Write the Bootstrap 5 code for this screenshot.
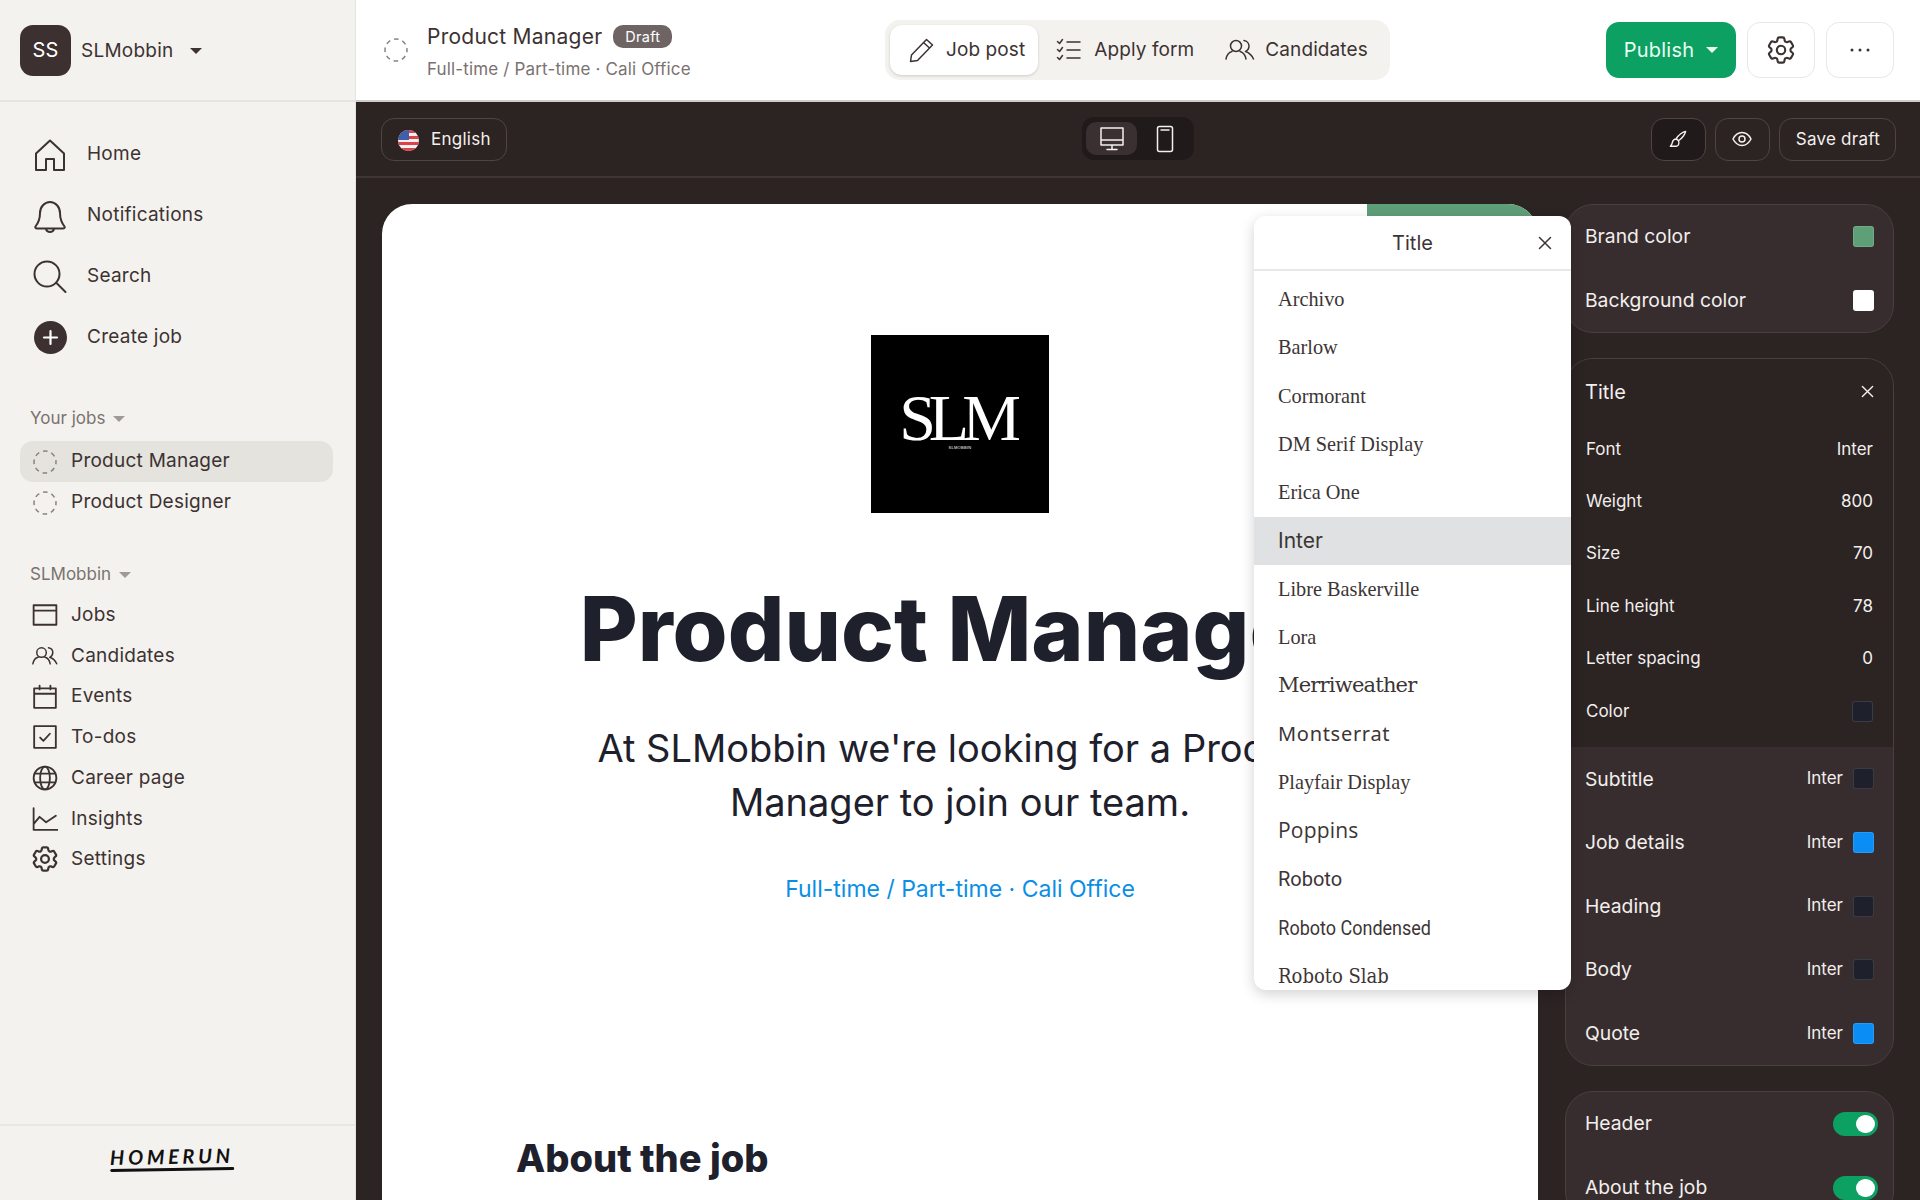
<!DOCTYPE html>
<html lang="en">
<head>
    <meta charset="UTF-8">
    <meta name="viewport" content="width=device-width, initial-scale=1">
    <title>Product Manager - Homerun</title>

    <link href="https://cdn.jsdelivr.net/npm/bootstrap@5.3.2/dist/css/bootstrap.min.css" rel="stylesheet">

    <style>
        html, body { height: 100%; margin: 0; overflow: hidden; }
        body { font-family: Inter, "Liberation Sans", sans-serif; color: #3d3232; font-size: 19px; letter-spacing: .25px; display: flex; }
        svg { flex: none; fill: none; stroke: currentColor; stroke-width: 1.5; stroke-linecap: round; stroke-linejoin: round; }

        /* left sidebar */
        .side { width: 356px; flex: none; height: 1200px; background: #f4f2ee; border-right: 1px solid #e6e4df; display: flex; flex-direction: column; }
        .side-head { height: 102px; padding: 2px 0 0 20px; border-bottom: 2px solid #e6e4df; }
        .avatar { width: 51px; height: 51px; border-radius: 13px; background: #3d3030; color: #fff; font-size: 20px; margin: -2px 10px 0 0; }
        .caret-down { width: 0; height: 0; border-left: 6px solid transparent; border-right: 6px solid transparent; border-top: 6px solid currentColor; display: inline-block; }
        .main-links { padding-top: 22px; margin-bottom: 39px; }
        .main-link { height: 61px; padding-left: 33px; gap: 20px; color: #3d3232; }
        .icon-slot { width: 34px; }
        .main-link svg { stroke-width: 2; }
        .side-label { font-size: 17px; color: #7a7270; padding-left: 30px; gap: 8px; height: 24px; letter-spacing: 0; }
        .side-label .caret-down { color: #a09a97; }
        .job-list { margin: 10px 0 40px; }
        .job-row { height: 41px; margin: 0 22px 0 20px; padding-left: 13px; gap: 14px; border-radius: 13px; }
        .job-row.is-on { background: #e4e3dd; }
        .dash-ring { color: #8a8381; }
        .org-list { padding-top: 8px; }
        .org-row { height: 40.7px; padding-left: 32px; gap: 13px; }
        .org-row svg { width: 26px; height: 26px; stroke-width: 1.7; }
        .side-foot { margin-top: auto; height: 76px; border-top: 2px solid #e9e7e2; padding: 0 12px 10px 0; }
        .brand-mark { transform: rotate(-1deg); }
        .brand-word { font-family: Lato, "Liberation Sans", sans-serif; font-style: italic; font-weight: 700; font-size: 20px; letter-spacing: 3.7px; color: #111; line-height: 22px; }
        .brand-line { height: 3px; background: #111; border-radius: 2px; margin-top: 1px; }

        /* top bar */
        .work { flex: 1; min-width: 0; height: 1200px; display: flex; flex-direction: column; background: #2c2323; }
        .topbar { height: 102px; flex: none; background: #fff; border-bottom: 2px solid #cfcdca; padding: 0 26px 0 28px; position: relative; }
        .job-block { margin-left: 19px; padding-top: 2px; }
        .job-title { font-size: 21px; line-height: 26px; color: #3d3232; }
        .draft-tag { background: #6e6464; color: #fff; font-size: 14.5px; border-radius: 10px; padding: 2px 12px; margin-left: 11px; line-height: 19px; }
        .job-sub { font-size: 17px; color: #7a7270; margin-top: 9px; line-height: 20px; letter-spacing: .15px; }
        .seg-wrap { position: absolute; left: 529px; top: 20px; width: 505px; height: 60px; background: #f4f2ee; border-radius: 15px; padding: 5px; letter-spacing: .1px; }
        .seg-btn { height: 50px; padding: 0 16px 0 18px; gap: 10px; border-radius: 12px; font-size: 19px; color: #3d3232; white-space: nowrap; }
        .seg-btn:nth-child(2) { gap: 12px; }
        .seg-btn:last-child { padding-left: 15px; }
        .seg-btn.is-on { background: #fff; box-shadow: 0 1px 3px rgba(0,0,0,.16); padding-right: 13px; }
        .top-actions { gap: 11px; }
        .publish-btn { background: #0ca062; color: #eafff4; height: 56px; width: 130px; border-radius: 13px; font-size: 20px; gap: 12px; }
        .ghost-btn { width: 68px; height: 56px; border: 1px solid #eae8e5; border-radius: 13px; background: #fff; color: #3d3232; }

        /* dark tool bar */
        .toolbar { height: 76px; flex: none; padding: 0 24px 0 25px; border-bottom: 2px solid #3f3535; color: #f4f0ee; position: relative; }
        .dark-btn { height: 43px; border: 1px solid #4f4445; border-radius: 13px; font-size: 17px; padding: 2px 15px 0 16px; gap: 12px; }
        .dark-btn.is-square { width: 55px; padding: 0; }
        .dark-btn.is-pressed { background: #211a1a; }
        .tool-actions { gap: 9px; }
        .device-wrap { position: absolute; left: 726px; top: 15px; width: 112px; height: 43px; background: #211a1a; border-radius: 12px; padding: 5px 4px; gap: 2px; }
        .device-btn { width: 52px; border-radius: 10px; }
        .device-btn.is-on { background: #3a3031; }

        /* canvas */
        .canvas { flex: 1; min-height: 0; padding: 26px 26px 0; gap: 27px; overflow: hidden; position: relative; }
        .sheet { width: 1156px; flex: none; background: #fff; border-radius: 30px 30px 0 0; overflow: hidden; height: 1100px; letter-spacing: 0; }
        .sheet-tab { width: 171px; height: 60px; background: #5f9f78; margin-left: auto; }
        .sheet-logo { width: 178px; height: 178px; background: #000; color: #fff; margin: 71px auto 0; }
        .logo-word { font-family: "Liberation Serif", serif; font-size: 66px; line-height: 48px; letter-spacing: -7px; margin-right: 7px; margin-top: -4px; }
        .logo-small { font-family: "Liberation Sans", sans-serif; font-size: 4px; line-height: 6px; letter-spacing: .3px; margin-top: 3px; }
        .sheet-title { font-family: Inter, sans-serif; font-weight: 800; font-size: 89px; line-height: 100px; color: #1e202c; white-space: nowrap; margin: 66px 0 0; }
        .sheet-sub { font-size: 38px; line-height: 54px; color: #1e202c; width: 760px; margin: 42px auto 0; }
        .sheet-meta { font-size: 23px; color: #0a8ee6; margin-top: 43px; }
        .sheet-head { font-weight: 800; font-size: 38px; line-height: 46px; color: #1e202c; margin: 228px 0 0 134px; }

        /* font popup */
        .font-pop { position: absolute; left: 898px; top: 38px; width: 317px; height: 774px; background: #fff; border-radius: 12px; overflow: hidden; box-shadow: 0 4px 14px rgba(0,0,0,.18); z-index: 5; color: #3d3535; letter-spacing: 0; }
        .font-pop-head { height: 55px; border-bottom: 2px solid #e8e8e8; font-size: 20px; position: relative; }
        .font-pop-close { position: absolute; right: 19px; top: 20px; }
        .font-rows { padding-top: 4px; }
        .font-row { height: 48.35px; padding-left: 24px; font-size: 21px; }
        .font-row.is-on { background: #dfe1e3; }
        .f-serif { font-family: "Liberation Serif", serif; font-size: 20.3px; }
        .f-merri { font-family: "DejaVu Serif", serif; font-size: 21px; letter-spacing: -.8px; }
        .f-mont { font-family: "Noto Sans", sans-serif; font-size: 20px; letter-spacing: .7px; }
        .f-pop { font-family: "Open Sans", sans-serif; font-size: 21px; letter-spacing: .2px; }
        .f-robo { font-family: Roboto, sans-serif; font-size: 20px; }
        .f-cond { font-family: Roboto, sans-serif; font-size: 20px; transform: scaleX(.9); transform-origin: left center; padding-left: 27px; }
        .f-slab { font-family: "DejaVu Serif Condensed", "DejaVu Serif", serif; font-size: 20px; }

        /* right panels */
        .panels { width: 329px; flex: none; gap: 25px; color: #f2efed; letter-spacing: 0; }
        .tool-box { background: #382d2e; border: 1px solid #4a3f40; border-radius: 28px; overflow: hidden; flex: none; }
        .swatch { width: 21px; height: 21px; border-radius: 3px; border: 1px solid rgba(255,255,255,.12); flex: none; }
        .box-row { height: 63.6px; padding: 0 19px; font-size: 19.3px; }
        .tool-dark { background: #2c2323; padding-top: 1px; height: 388px; }
        .tool-title { height: 63px; padding: 0 19px; font-size: 20px; }
        .prop-row { height: 52.4px; padding: 0 20px; font-size: 17px; }
        .mini-font { font-size: 17px; margin-right: 10px; }
        .toggle-bar { width: 45px; height: 24px; background: #0ca062; border-radius: 12px; padding: 3px; }
        .toggle-dot { width: 19px; height: 18px; border-radius: 9px; background: #fff; margin-left: auto; }
        .box-row.has-toggle { padding-right: 15px; }
    </style>
</head>
<body>

<!-- iconos -->
<svg width="0" height="0" class="position-absolute">
    <symbol id="i-ring" viewBox="0 0 24 24"><circle cx="12" cy="12" r="11" stroke-dasharray="4.600 4.040" stroke-dashoffset="2.300" stroke-linecap="butt"/></symbol>
    <symbol id="i-users" viewBox="0 0 30 24"><circle cx="11" cy="8" r="5.500"/><path d="M1 21c1-5 4-7 6-7.500M21 21c-1-5-4-7-6-7.500M19 2.500c3 .5 5 3 5 5.500s-1.500 4.500-3.500 5.500c3 1 6 3 8 7.500"/></symbol>
    <symbol id="i-gear" viewBox="2 2 20 20"><path d="M9.594 3.94c.09-.542.56-.94 1.11-.94h2.593c.55 0 1.02.398 1.11.94l.213 1.281c.063.374.313.686.645.87.074.04.147.083.22.127.325.196.72.257 1.075.124l1.217-.456a1.125 1.125 0 0 1 1.37.49l1.296 2.247a1.125 1.125 0 0 1-.26 1.431l-1.003.827c-.293.241-.438.613-.43.992a7.723 7.723 0 0 1 0 .255c-.008.378.137.75.43.991l1.004.827c.424.35.534.955.26 1.43l-1.298 2.247a1.125 1.125 0 0 1-1.369.491l-1.217-.456c-.355-.133-.75-.072-1.076.124a6.47 6.47 0 0 1-.22.128c-.331.183-.581.495-.644.869l-.213 1.281c-.09.543-.56.94-1.11.94h-2.594c-.55 0-1.019-.398-1.11-.94l-.213-1.281c-.062-.374-.312-.686-.644-.87a6.52 6.52 0 0 1-.22-.127c-.325-.196-.72-.257-1.076-.124l-1.217.456a1.125 1.125 0 0 1-1.369-.49l-1.297-2.247a1.125 1.125 0 0 1 .26-1.431l1.004-.827c.292-.24.437-.613.43-.991a6.932 6.932 0 0 1 0-.255c.007-.38-.138-.751-.43-.992l-1.004-.827a1.125 1.125 0 0 1-.26-1.43l1.297-2.247a1.125 1.125 0 0 1 1.37-.491l1.216.456c.356.133.751.072 1.076-.124.072-.044.146-.086.22-.128.332-.183.582-.495.644-.869l.214-1.28Z"/><circle cx="12" cy="12" r="3"/></symbol>
    <symbol id="i-x" viewBox="0 0 14 14"><path d="M1.500 1.500l11 11M12.500 1.500l-11 11"/></symbol>
</svg>

<!-- Sidebar -->
<aside class="side">
    <div class="side-head d-flex align-items-center">
        <div class="avatar d-flex align-items-center justify-content-center">SS</div>
        <span>SLMobbin</span>
        <span class="caret-down ms-3"></span>
    </div>

    <div class="main-links">
        <div class="main-link d-flex align-items-center">
            <span class="icon-slot d-flex justify-content-center"><svg width="32" height="32" viewBox="0 0 32 32"><path d="M2 14.500L16 1.500l14 13V31H20V20h-8v11H2z"/></svg></span>Home
        </div>
        <div class="main-link d-flex align-items-center">
            <span class="icon-slot d-flex justify-content-center"><svg width="32" height="34" viewBox="0 0 32 34"><path d="M6 14c0-6 4.500-11 10-11s10 5 10 11c0 6 1 9 4.500 13.500 .5 1-.2 2-1.500 2H3c-1.300 0-2-1-1.500-2C5 23 6 20 6 14zM12 30c.5 2 2 3 4 3s3.500-1 4-3"/></svg></span>Notifications
        </div>
        <div class="main-link d-flex align-items-center">
            <span class="icon-slot d-flex justify-content-center"><svg width="34" height="34" viewBox="0 0 34 34"><circle cx="14" cy="14" r="12.500"/><path d="M23.500 23l9 9"/></svg></span>Search
        </div>
        <div class="main-link d-flex align-items-center">
            <span class="icon-slot d-flex justify-content-center"><svg width="33" height="33" viewBox="0 0 33 33"><circle cx="16.500" cy="16.500" r="16.500" fill="#3d3030" stroke="none"/><path d="M16.500 10v13M10 16.500h13" stroke="#fff" stroke-width="2.200"/></svg></span>Create job
        </div>
    </div>

    <div class="side-label d-flex align-items-center">Your jobs <span class="caret-down"></span></div>
    <div class="job-list">
        <div class="job-row is-on d-flex align-items-center"><svg class="dash-ring" width="24" height="24"><use href="#i-ring"/></svg>Product Manager</div>
        <div class="job-row d-flex align-items-center"><svg class="dash-ring" width="24" height="24"><use href="#i-ring"/></svg>Product Designer</div>
    </div>

    <div class="side-label d-flex align-items-center">SLMobbin <span class="caret-down"></span></div>
    <div class="org-list">
        <div class="org-row d-flex align-items-center"><svg viewBox="0 0 24 24"><path d="M1.500 3h21v18h-21zM1.500 8h21"/></svg>Jobs</div>
        <div class="org-row d-flex align-items-center"><svg viewBox="0 0 30 24"><use href="#i-users"/></svg>Candidates</div>
        <div class="org-row d-flex align-items-center"><svg viewBox="0 0 24 24"><path d="M2 4h20v18H2zM2 9h20M7 1.500V5M17 1.500V5"/></svg>Events</div>
        <div class="org-row d-flex align-items-center"><svg viewBox="0 0 24 24"><path d="M2 2h20v20H2zM7.500 12.500l3 3 6-6.500"/></svg>To-dos</div>
        <div class="org-row d-flex align-items-center"><svg viewBox="0 0 24 24"><circle cx="12" cy="12" r="10.500"/><ellipse cx="12" cy="12" rx="4.500" ry="10.500"/><path d="M2.500 8h19M2.500 16h19"/></svg>Career page</div>
        <div class="org-row d-flex align-items-center"><svg viewBox="0 0 24 24"><path d="M1.500 2v20h22M2 16l5-6 6 5 9-6"/></svg>Insights</div>
        <div class="org-row d-flex align-items-center"><svg><use href="#i-gear"/></svg>Settings</div>
    </div>

    <div class="side-foot d-flex align-items-center justify-content-center">
        <div class="brand-mark">
            <div class="brand-word">HOMERUN</div>
            <div class="brand-line"></div>
        </div>
    </div>
</aside>

<div class="work">
    <!-- Barra superior -->
    <header class="topbar d-flex align-items-center">
        <svg class="dash-ring" width="24" height="24"><use href="#i-ring"/></svg>
        <div class="job-block">
            <div class="d-flex align-items-center"><span class="job-title">Product Manager</span><span class="draft-tag">Draft</span></div>
            <div class="job-sub">Full-time / Part-time · Cali Office</div>
        </div>

        <div class="seg-wrap d-flex align-items-center">
            <div class="seg-btn is-on d-flex align-items-center">
                <svg width="28" height="28" viewBox="0 0 28 28"><path d="M2.500 25.500l1-6.500L18.500 3.500l6 5.500-15 15.500zM15.500 6.500l6 5.500"/></svg>Job post
            </div>
            <div class="seg-btn d-flex align-items-center">
                <svg width="26" height="24" viewBox="0 0 26 24"><path d="M1.500 3.500l2 2 3-4M1.500 11.500l2 2 3-4M1.500 19.500l2 2 3-4M11 4h13M11 12h13M11 20h13"/></svg>Apply form
            </div>
            <div class="seg-btn d-flex align-items-center">
                <svg width="30" height="24"><use href="#i-users"/></svg>Candidates
            </div>
        </div>

        <div class="top-actions ms-auto d-flex align-items-center">
            <div class="publish-btn d-flex align-items-center justify-content-center">Publish <span class="caret-down"></span></div>
            <div class="ghost-btn d-flex align-items-center justify-content-center"><svg width="28" height="28"><use href="#i-gear"/></svg></div>
            <div class="ghost-btn d-flex align-items-center justify-content-center">
                <svg width="20" height="4" viewBox="0 0 20 4"><circle cx="2" cy="2" r="1.500" fill="currentColor" stroke="none"/><circle cx="10" cy="2" r="1.500" fill="currentColor" stroke="none"/><circle cx="18" cy="2" r="1.500" fill="currentColor" stroke="none"/></svg>
            </div>
        </div>
    </header>

    <!-- Barra oscura -->
    <div class="toolbar d-flex align-items-center">
        <div class="dark-btn d-flex align-items-center">
            <svg width="21" height="21" viewBox="0 0 21 21" style="stroke:none">
                <defs><clipPath id="flag-clip"><circle cx="10.500" cy="10.500" r="10.500"/></clipPath></defs>
                <g clip-path="url(#flag-clip)">
                    <rect width="21" height="21" fill="#f4f0ee"/>
                    <path d="M0 0h21v3H0zM0 6h21v3H0zM0 12h21v3H0zM0 18h21v3H0z" fill="#d8434e"/>
                    <rect width="11" height="10" fill="#3f5fa8"/>
                </g>
            </svg>English
        </div>
        <div class="device-wrap d-flex">
            <div class="device-btn is-on d-flex align-items-center justify-content-center">
                <svg width="26" height="26" viewBox="0 0 26 26"><path d="M2 2h22v17H2zM2 14h22M13 19v4M8 23.500h10"/></svg>
            </div>
            <div class="device-btn d-flex align-items-center justify-content-center">
                <svg width="18" height="28" viewBox="0 0 18 28"><rect x="1.500" y="1.500" width="15" height="25" rx="2"/><path d="M5 5h8"/></svg>
            </div>
        </div>
        <div class="tool-actions ms-auto d-flex">
            <div class="dark-btn is-square is-pressed d-flex align-items-center justify-content-center"><svg width="18" height="18" viewBox="0 0 20 20"><path d="M18.500 1.500c-3 .5-8 4-10.500 8l2.500 2.500c4-2.500 7.500-7.500 8-10.500zM8 10c-3 0-4 2-4.500 4.500-.2 1.500-1 2.500-2 3.500h7c2.500-.5 3-3.500 2-6z"/></svg></div>
            <div class="dark-btn is-square d-flex align-items-center justify-content-center"><svg width="20" height="16" viewBox="0 0 20 16"><path d="M1 8c2-4 5-6.500 9-6.500s7 2.500 9 6.500c-2 4-5 6.500-9 6.500S3 12 1 8z"/><circle cx="10" cy="8" r="3"/></svg></div>
            <div class="dark-btn d-flex align-items-center">Save draft</div>
        </div>
    </div>

    <!-- Vista previa y paneles -->
    <div class="canvas d-flex">
        <div class="sheet text-center">
            <div class="sheet-tab"></div>
            <div class="sheet-logo d-flex flex-column align-items-center justify-content-center">
                <div class="logo-word">SLM</div>
                <div class="logo-small">SLMOBBIN</div>
            </div>
            <h1 class="sheet-title">Product Manager</h1>
            <p class="sheet-sub">At SLMobbin we're looking for a Product Manager to join our team.</p>
            <div class="sheet-meta">Full-time / Part-time · Cali Office</div>
            <h2 class="sheet-head text-start">About the job</h2>
        </div>

        <div class="font-pop">
            <div class="font-pop-head d-flex align-items-center justify-content-center">Title
                <svg class="font-pop-close" width="14" height="14"><use href="#i-x"/></svg>
            </div>
            <div class="font-rows">
                <div class="font-row f-serif d-flex align-items-center">Archivo</div>
                <div class="font-row f-serif d-flex align-items-center">Barlow</div>
                <div class="font-row f-serif d-flex align-items-center">Cormorant</div>
                <div class="font-row f-serif d-flex align-items-center">DM Serif Display</div>
                <div class="font-row f-serif d-flex align-items-center">Erica One</div>
                <div class="font-row is-on d-flex align-items-center">Inter</div>
                <div class="font-row f-serif d-flex align-items-center">Libre Baskerville</div>
                <div class="font-row f-serif d-flex align-items-center">Lora</div>
                <div class="font-row f-merri d-flex align-items-center">Merriweather</div>
                <div class="font-row f-mont d-flex align-items-center">Montserrat</div>
                <div class="font-row f-serif d-flex align-items-center">Playfair Display</div>
                <div class="font-row f-pop d-flex align-items-center">Poppins</div>
                <div class="font-row f-robo d-flex align-items-center">Roboto</div>
                <div class="font-row f-cond d-flex align-items-center">Roboto Condensed</div>
                <div class="font-row f-slab d-flex align-items-center">Roboto Slab</div>
            </div>
        </div>

        <div class="panels d-flex flex-column">
            <div class="tool-box">
                <div class="box-row d-flex align-items-center justify-content-between">Brand color <span class="swatch" style="background:#5f9f78"></span></div>
                <div class="box-row d-flex align-items-center justify-content-between">Background color <span class="swatch" style="background:#fff"></span></div>
            </div>
            <div class="tool-box">
                <div class="tool-dark">
                    <div class="tool-title d-flex align-items-center justify-content-between">Title <svg width="13" height="13"><use href="#i-x"/></svg></div>
                    <div class="prop-row d-flex align-items-center justify-content-between"><span>Font</span><span>Inter</span></div>
                    <div class="prop-row d-flex align-items-center justify-content-between"><span>Weight</span><span>800</span></div>
                    <div class="prop-row d-flex align-items-center justify-content-between"><span>Size</span><span>70</span></div>
                    <div class="prop-row d-flex align-items-center justify-content-between"><span>Line height</span><span>78</span></div>
                    <div class="prop-row d-flex align-items-center justify-content-between"><span>Letter spacing</span><span>0</span></div>
                    <div class="prop-row d-flex align-items-center justify-content-between"><span>Color</span><span class="swatch" style="background:#1e202c"></span></div>
                </div>
                <div class="box-row d-flex align-items-center"><span class="me-auto">Subtitle</span><span class="mini-font">Inter</span><span class="swatch" style="background:#1e202c"></span></div>
                <div class="box-row d-flex align-items-center"><span class="me-auto">Job details</span><span class="mini-font">Inter</span><span class="swatch" style="background:#0a8ef5"></span></div>
                <div class="box-row d-flex align-items-center"><span class="me-auto">Heading</span><span class="mini-font">Inter</span><span class="swatch" style="background:#1e202c"></span></div>
                <div class="box-row d-flex align-items-center"><span class="me-auto">Body</span><span class="mini-font">Inter</span><span class="swatch" style="background:#1e202c"></span></div>
                <div class="box-row d-flex align-items-center"><span class="me-auto">Quote</span><span class="mini-font">Inter</span><span class="swatch" style="background:#0a8ef5"></span></div>
            </div>
            <div class="tool-box">
                <div class="box-row has-toggle d-flex align-items-center justify-content-between">Header <div class="toggle-bar"><div class="toggle-dot"></div></div></div>
                <div class="box-row has-toggle d-flex align-items-center justify-content-between">About the job <div class="toggle-bar"><div class="toggle-dot"></div></div></div>
            </div>
        </div>
    </div>
</div>

<script src="https://cdn.jsdelivr.net/npm/bootstrap@5.3.2/dist/js/bootstrap.bundle.min.js"></script>
</body>
</html>
